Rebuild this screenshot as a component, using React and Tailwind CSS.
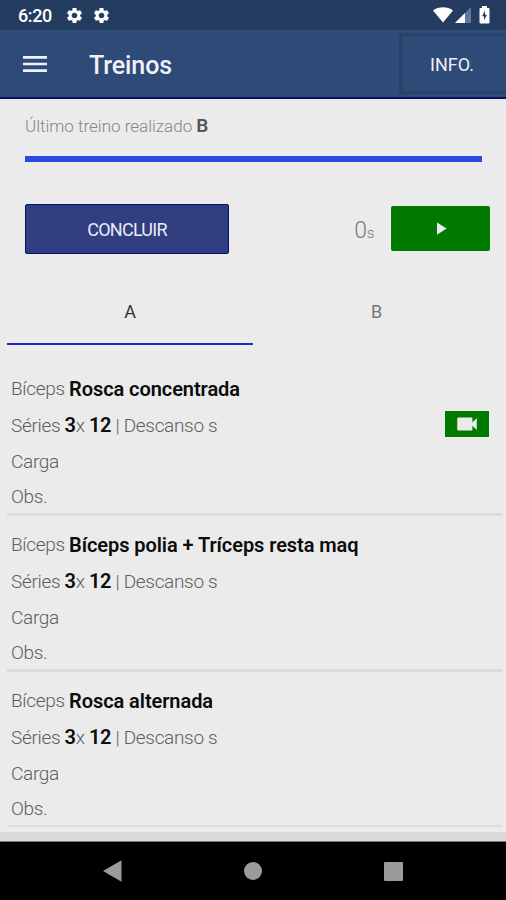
import React, { useState } from "react";
import { MdSettings, MdMenu, MdPlayArrow, MdVideocam } from "react-icons/md";

const exercises = [
  { id: 1, group: "Bíceps", name: "Rosca concentrada", sets: 3, reps: 12, video: true },
  { id: 2, group: "Bíceps", name: "Bíceps polia + Tríceps resta maq", sets: 3, reps: 12 },
  { id: 3, group: "Bíceps", name: "Rosca alternada", sets: 3, reps: 12 },
];

const StatusBar = () => {
  return (
    <div className="flex h-[30px] shrink-0 items-center bg-[#243c60] pr-[16px] pl-[18px] text-white">
      <span className="w-[47px] pt-[2px] text-[18px] leading-none font-medium tracking-[-0.4px]">6:20</span>
      <MdSettings className="mr-[8px] h-[19px] w-[19px]" />
      <MdSettings className="h-[19px] w-[19px]" />
      <div className="ml-auto flex items-center">
        <svg width="20" height="16" viewBox="0 0 20 16" fill="currentColor">
          <path d="M0 3.5C5.5-.8 14.500-.8 20 3.500L10 15.500Z" />
        </svg>
        <svg className="ml-[2px]" width="16" height="16" viewBox="0 0 16 16">
          <path d="M0 16L16 0V16Z" fill="#62779b" />
          <path d="M0 16L10 6V16Z" fill="#fff" />
        </svg>
        <svg className="ml-[8px]" width="11" height="18" viewBox="0 0 11 18">
          <path
            d="M3 0H8V2H9.500Q10.500 2 10.500 3V16.500Q10.500 17.500 9.500 17.500H1.500Q.5 17.500 .5 16.500V3Q.5 2 1.500 2H3Z"
            fill="#fff"
          />
          <path d="M6 4.500L3 10.200H5V14.300L8 8.800H6Z" fill="#243c60" />
        </svg>
      </div>
    </div>
  );
};

const Header = () => {
  return (
    <header className="flex h-[69px] shrink-0 items-center border-b-2 border-[#0b0d69] bg-[#2e4a76] pl-[19px] text-[#eef0fa]">
      <MdMenu className="h-[32px] w-[32px]" />
      <h1 className="ml-[38px] pt-[4px] text-[25px] leading-none font-medium tracking-[-0.1px]">Treinos</h1>
      <button className="ml-auto h-[61px] w-[107px] border-[3px] border-r-0 border-[#2a4269] pt-[2px] pr-[4px] text-[18px]">
        INFO.
      </button>
    </header>
  );
};

const Exercise = ({ item }) => {
  return (
    <li className="flex h-[156px] flex-col border-b-[3px] border-[#dcdcdc] pt-[11px] pl-[4px] text-[19px] font-light tracking-[-0.32px] text-[#5e5e5e] last:h-[155px] last:border-b-2">
      <p className="flex h-[37px] items-center whitespace-pre">
        {item.group}{" "}
        <b className="text-[20px] font-semibold tracking-[-0.07px] text-[#0c0c0c]">{item.name}</b>
      </p>
      <div className="flex h-[37px] items-center justify-between pr-[13px]">
        <p className="pb-px whitespace-pre">
          Séries <b className="text-[20px] font-semibold text-[#0c0c0c]">{item.sets}</b>x{" "}
          <b className="text-[20px] font-semibold text-[#0c0c0c]">{item.reps}</b> | Descanso s
        </p>
        {item.video && (
          <button className="mb-[2px] flex h-[26px] w-[44px] items-center justify-center bg-[#007a00] text-[#ebebeb]">
            <MdVideocam className="h-[26px] w-[26px]" />
          </button>
        )}
      </div>
      <p className="flex h-[36px] items-center pt-[2px]">Carga</p>
      <p className="flex h-[35px] items-center pt-[2px]">Obs.</p>
    </li>
  );
};

const App = () => {
  const [tab, setTab] = useState("A");

  return (
    <div className="flex h-[900px] w-[506px] flex-col overflow-hidden bg-[#ebebeb] font-[Roboto,sans-serif]">
      <StatusBar />
      <Header />
      <main className="flex flex-1 flex-col">
        <section className="px-[25px] pt-[14px]">
          <p className="h-[26px] text-[17px] leading-[26px] font-light text-[#868686]">
            Último treino realizado <b className="text-[19px] font-semibold text-[#555]">B</b>
          </p>
          <div className="mt-[17px] mr-[-1px] h-[6px] bg-[#2c49df]"></div>
        </section>
        <section className="mt-[42px] flex h-[50px] items-center pr-[16px] pl-[25px]">
          <button className="h-[50px] w-[204px] rounded-[2px] border border-[#02126d] bg-[#313f80] text-[18px] tracking-[-0.75px] text-[#ebebf5]">
            CONCLUIR
          </button>
          <p className="ml-auto pt-[4px] font-light tracking-[-0.3px] text-[#7c7c7c]">
            <span className="text-[23px]">0</span>
            <span className="text-[15px]">s</span>
          </p>
          <button className="mb-[2px] ml-[17px] flex h-[45px] w-[99px] items-center justify-center rounded-[2px] bg-[#007a00] text-[#ebebeb]">
            <MdPlayArrow className="h-[21px] w-[21px]" />
          </button>
        </section>
        <nav className="mx-[7px] mt-[26px] flex h-[65px]">
          {["A", "B"].map((name) => (
            <button
              key={name}
              onClick={() => setTab(name)}
              className={
                tab === name
                  ? "w-1/2 border-b-2 border-[#2129c4] text-[18px] text-[#333]"
                  : "w-1/2 border-b-2 border-transparent pl-px text-[18px] text-[#777]"
              }
            >
              {name}
            </button>
          ))}
        </nav>
        <ul className="mt-[15px] mr-[4px] ml-[7px]">
          {exercises.map((item) => (
            <Exercise key={item.id} item={item} />
          ))}
        </ul>
      </main>
      <div className="h-[10px] shrink-0 border-b border-[#777] bg-[#dbdbdb]"></div>
      <nav className="flex h-[58px] shrink-0 items-center justify-between bg-black pr-[103px] pl-[103px] text-[#9b9b9b]">
        <svg width="19" height="22" viewBox="0 0 19 22" fill="currentColor">
          <path d="M0 11L18 .5Q18.500.3 18.500 1V21Q18.500 21.700 18 21.500Z" />
        </svg>
        <span className="h-[18px] w-[18px] rounded-full bg-[#9b9b9b]"></span>
        <span className="h-[19px] w-[19px] rounded-[1px] bg-[#9b9b9b]"></span>
      </nav>
    </div>
  );
};

export default App;
